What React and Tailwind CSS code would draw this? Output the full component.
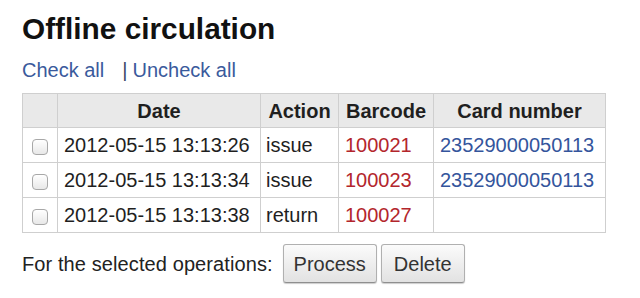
import React from 'react';

const rows = [
    { date: '2012-05-15 13:13:26', action: 'issue', barcode: '100021', card: '23529000050113' },
    { date: '2012-05-15 13:13:34', action: 'issue', barcode: '100023', card: '23529000050113' },
    { date: '2012-05-15 13:13:38', action: 'return', barcode: '100027', card: '' },
];

function Box() {
    return <span className="inline-block w-[16px] h-[16px] rounded-[4px] border border-[#a8a8a8] bg-gradient-to-b from-white to-[#e8e8e8] align-middle" />;
}

export default function App() {
    return (
        <div className="w-[640px] h-[298px] bg-white px-[22px] pt-[11px] text-[#1f1f1f] font-['Liberation_Sans',Arial,sans-serif]">
            <h1 className="text-[29.8px] leading-[36px] font-bold text-[#111]">Offline circulation</h1>
            <div className="mt-[11px] text-[20px] leading-[24px] text-[#3a5a9c]">
                <span>Check all</span>
                <span className="ml-[18px] text-[#3d4a6a]">|</span>
                <span className="ml-[5px]">Uncheck all</span>
            </div>
            <table className="mt-[11px] w-[584px] table-fixed border-collapse text-[20px] leading-[22px]">
                <thead>
                    <tr className="bg-[#e9e9e9] h-[34px]">
                        <th className="w-[35px] border border-[#cfcfcf]" />
                        <th className="w-[203px] border border-[#cfcfcf] font-bold text-center">Date</th>
                        <th className="w-[78px] border border-[#cfcfcf] font-bold text-center">Action</th>
                        <th className="w-[95px] border border-[#cfcfcf] font-bold text-center">Barcode</th>
                        <th className="border border-[#cfcfcf] font-bold text-center">Card number</th>
                    </tr>
                </thead>
                <tbody>
                    {rows.map((r, i) => (
                        <tr key={i} className="h-[35px]">
                            <td className="border border-[#cfcfcf] text-center"><Box /></td>
                            <td className="border border-[#cfcfcf] px-[6px] whitespace-nowrap">{r.date}</td>
                            <td className="border border-[#cfcfcf] px-[5px]">{r.action}</td>
                            <td className="border border-[#cfcfcf] px-[6px] text-[#b3262c]">{r.barcode}</td>
                            <td className="border border-[#cfcfcf] px-[6px] text-[#34559c] whitespace-nowrap">{r.card}</td>
                        </tr>
                    ))}
                </tbody>
            </table>
            <div className="mt-[11px] flex items-center text-[20px] text-[#222]">
                <span className="tracking-[0.1px]">For the selected operations:</span>
                <button className="ml-[10px] h-[39px] w-[94px] rounded-[3px] border border-[#b0b0b0] border-b-[#8f8f8f] bg-gradient-to-b from-[#fbfbfb] to-[#e2e2e2] shadow-[0_1px_1px_rgba(0,0,0,0.2)] text-[#333]">Process</button>
                <button className="ml-[4px] h-[39px] w-[84px] rounded-[3px] border border-[#b0b0b0] border-b-[#8f8f8f] bg-gradient-to-b from-[#fbfbfb] to-[#e2e2e2] shadow-[0_1px_1px_rgba(0,0,0,0.2)] text-[#333]">Delete</button>
            </div>
        </div>
    );
}
